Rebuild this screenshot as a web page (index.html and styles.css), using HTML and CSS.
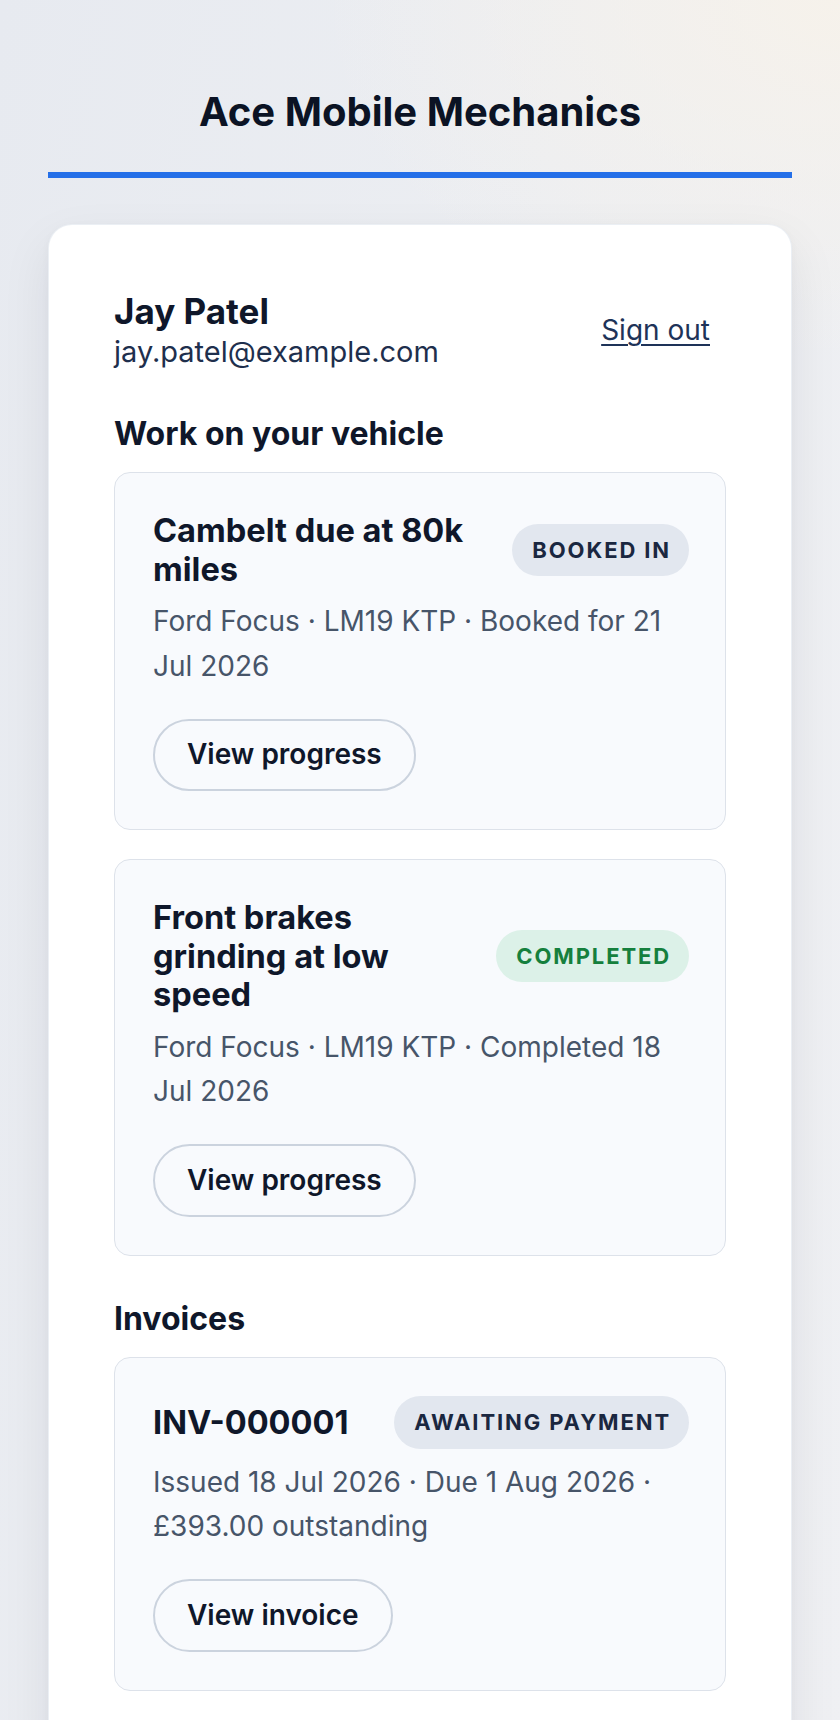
FILE: index.html
```html
<!DOCTYPE html>
<html lang="en">
<head>
<meta charset="utf-8">
<title>Ace Mobile Mechanics – Your account</title>
<link rel="stylesheet" href="styles.css">
</head>
<body>
<header class="site-header">
  <h1 class="site-title">Ace Mobile Mechanics</h1>
</header>
<main class="panel">
  <div class="account">
    <div class="account-info">
      <h2 class="account-name">Jay Patel</h2>
      <p class="account-email">jay.patel@example.com</p>
    </div>
    <a class="signout" href="#">Sign out</a>
  </div>

  <section class="section">
    <h3 class="section-title">Work on your vehicle</h3>
    <ul class="list">
      <li class="item">
        <div class="item-head">
          <h4 class="item-title">Cambelt due at 80k miles</h4>
          <span class="badge badge-neutral">Booked in</span>
        </div>
        <p class="item-meta">Ford Focus · LM19 KTP · Booked for 21 Jul 2026</p>
        <div class="item-actions"><a class="btn" href="#">View progress</a></div>
      </li>
      <li class="item">
        <div class="item-head">
          <h4 class="item-title">Front brakes grinding at low speed</h4>
          <span class="badge badge-success">Completed</span>
        </div>
        <p class="item-meta">Ford Focus · LM19 KTP · Completed 18 Jul 2026</p>
        <div class="item-actions"><a class="btn" href="#">View progress</a></div>
      </li>
    </ul>
  </section>

  <section class="section">
    <h3 class="section-title">Invoices</h3>
    <ul class="list">
      <li class="item">
        <div class="item-head">
          <h4 class="item-title">INV-000001</h4>
          <span class="badge badge-neutral">Awaiting payment</span>
        </div>
        <p class="item-meta">Issued 18 Jul 2026 · Due 1 Aug 2026 · £393.00 outstanding</p>
        <div class="item-actions"><a class="btn" href="#">View invoice</a></div>
      </li>
    </ul>
  </section>
</main>
</body>
</html>
```

FILE: styles.css
```css
html {
  min-height: 100%;
  background:
    radial-gradient(ellipse 520px 360px at 100% 0%, rgba(247, 242, 234, 0.9) 0%, rgba(247, 242, 234, 0) 100%),
    linear-gradient(100deg, #e7eaf0 0%, #eceef2 50%, #eff0f3 100%);
}

body {
  margin: 0;
  font-family: Inter, "Noto Sans", "Liberation Sans", sans-serif;
  color: #0f172a;
  padding-bottom: 60px;
}

.site-header {
  margin: 0 48px;
  padding: 88px 0 36px;
  border-bottom: 6px solid #246fe8;
  text-align: center;
}

.site-title {
  margin: 0;
  font-size: 40px;
  line-height: 48px;
  font-weight: 700;
  color: #0b1324;
}

.panel {
  display: block;
  margin: 46px 48px 0;
  padding: 65px;
  background: #ffffff;
  border: 1px solid rgba(226, 232, 240, 0.7);
  border-radius: 24px;
  box-shadow: 0 20px 50px rgba(15, 23, 42, 0.08), 0 2px 8px rgba(15, 23, 42, 0.03);
}

.account {
  display: flex;
  align-items: center;
  justify-content: space-between;
  gap: 24px;
  margin-bottom: 43px;
}

.account-name {
  margin: 0;
  font-size: 35px;
  line-height: 42px;
  font-weight: 700;
  color: #0f172a;
}

.account-email {
  margin: 0;
  font-size: 29px;
  line-height: 40px;
  color: #1e2f4d;
}

.signout {
  padding: 8px 16px;
  font-size: 28px;
  line-height: 33.6px;
  color: #1e3358;
  text-decoration: underline;
  text-underline-offset: 4px;
  text-decoration-thickness: 2px;
}

.section + .section {
  margin-top: 44px;
}

.section-title {
  margin: 0 0 19px;
  font-size: 32px;
  line-height: 38.4px;
  font-weight: 700;
  color: #0f172a;
}

.list {
  list-style: none;
  margin: 0;
  padding: 0;
  display: flex;
  flex-direction: column;
  gap: 29px;
}

.item {
  background: #f8fafd;
  border: 1px solid #dde2ea;
  border-radius: 16px;
  padding: 38px 36px 38px 38px;
}

.item-head {
  display: flex;
  align-items: center;
  gap: 24px;
}

.item-title {
  flex: 1;
  min-width: 0;
  margin: 0;
  font-size: 32.6px;
  line-height: 38.4px;
  font-weight: 700;
  color: #0f172a;
}

.badge {
  flex-shrink: 0;
  padding: 13px 18px 13px 20px;
  border-radius: 999px;
  font-size: 22px;
  line-height: 26.4px;
  font-weight: 700;
  letter-spacing: 0.086em;
  text-transform: uppercase;
}

.badge-neutral {
  background: #e2e7ef;
  color: #1a2740;
}

.badge-success {
  background: #dcf1e8;
  color: #15803d;
}

.item-meta {
  margin: 11px 0 0;
  font-size: 28px;
  line-height: 44.8px;
  color: #475569;
}

.item-actions {
  margin-top: 30px;
}

.btn {
  display: inline-block;
  padding: 17.5px 32px;
  border: 2px solid #cbd3de;
  border-radius: 999px;
  font-size: 28px;
  line-height: 33.6px;
  font-weight: 600;
  color: #0f172a;
  text-decoration: none;
}
```
